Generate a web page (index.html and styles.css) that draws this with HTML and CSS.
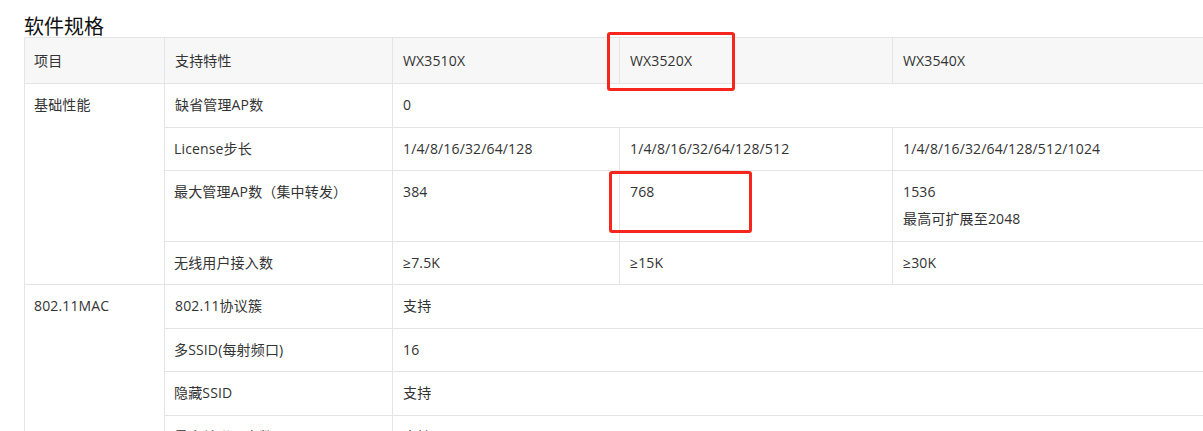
FILE: index.html
```html
<!DOCTYPE html>
<html lang="zh-CN">
<head>
  <meta charset="UTF-8" />
  <title>软件规格</title>
  <link rel="stylesheet" href="styles.css">
</head>
<body>
  <div class="page">
    <h3 class="title">软件规格</h3>
    <table class="spec">
      <colgroup>
        <col class="c-item">
        <col class="c-feat">
        <col class="c-m1">
        <col class="c-m2">
        <col class="c-m3">
      </colgroup>
      <thead>
        <tr>
          <th>项目</th>
          <th>支持特性</th>
          <th>WX3510X</th>
          <th>WX3520X</th>
          <th>WX3540X</th>
        </tr>
      </thead>
      <tbody>
        <tr>
          <td rowspan="4">基础性能</td>
          <td>缺省管理AP数</td>
          <td colspan="3">0</td>
        </tr>
        <tr>
          <td>License步长</td>
          <td>1/4/8/16/32/64/128</td>
          <td>1/4/8/16/32/64/128/512</td>
          <td>1/4/8/16/32/64/128/512/1024</td>
        </tr>
        <tr>
          <td>最大管理AP数（集中转发）</td>
          <td>384</td>
          <td>768</td>
          <td>1536<p class="sub">最高可扩展至2048</p></td>
        </tr>
        <tr>
          <td>无线用户接入数</td>
          <td>≥7.5K</td>
          <td>≥15K</td>
          <td>≥30K</td>
        </tr>
        <tr>
          <td rowspan="5">802.11MAC</td>
          <td>802.11协议簇</td>
          <td colspan="3">支持</td>
        </tr>
        <tr>
          <td>多SSID(每射频口)</td>
          <td colspan="3">16</td>
        </tr>
        <tr>
          <td>隐藏SSID</td>
          <td colspan="3">支持</td>
        </tr>
        <tr>
          <td>最大关联用户数</td>
          <td colspan="3">支持</td>
        </tr>
        <tr>
          <td>WMM</td>
          <td colspan="3">支持</td>
        </tr>
      </tbody>
    </table>

    <div class="mark mark-head"></div>
    <div class="mark mark-cell"></div>
  </div>
</body>
</html>
```

FILE: styles.css
```css
html, body {
  margin: 0;
  padding: 0;
  overflow: hidden;
  background: #fff;
}
.page {
  position: relative;
  padding: 15px 0 0 24px;
  font-family: "Open Sans", "Noto Sans CJK SC", sans-serif;
  color: #333;
}
.title {
  margin: 0;
  font-size: 20px;
  line-height: 22px;
  font-weight: normal;
  color: #111;
  font-family: "Noto Sans CJK SC", sans-serif;
}
.spec {
  width: 1300px;
  table-layout: fixed;
  border-collapse: collapse;
  font-size: 14px;
  line-height: 22px;
  letter-spacing: 0.15px;
}
.c-item { width: 140px; }
.c-feat { width: 228px; }
.c-m1 { width: 227px; }
.c-m2 { width: 273px; }
.spec th, .spec td {
  border: 1px solid #e4e4e4;
  text-align: left;
  vertical-align: top;
  font-weight: normal;
  padding: 10px 9px 10.5px;
}
.spec th {
  background: #f7f7f7;
  padding-top: 12px;
  padding-bottom: 11px;
}
.spec td + td, .spec th + th {
  padding-left: 10px;
}
.spec .sub {
  margin: 5px 0 0;
}
.mark {
  position: absolute;
  box-sizing: border-box;
  border: 3px solid #f7261c;
  border-radius: 3px;
}
.mark-head {
  left: 607px;
  top: 32px;
  width: 128px;
  height: 59px;
}
.mark-cell {
  left: 609px;
  top: 171px;
  width: 143px;
  height: 62px;
}
```
